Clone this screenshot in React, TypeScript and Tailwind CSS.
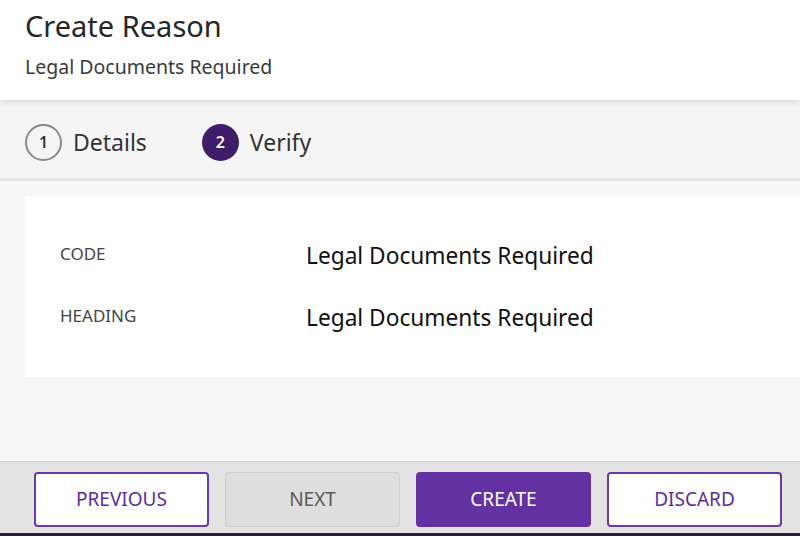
const font = { fontFamily: '"Noto Sans", "Open Sans", sans-serif' };

type Step = { n: number; label: string; active: boolean };

const steps: Step[] = [
  { n: 1, label: "Details", active: false },
  { n: 2, label: "Verify", active: true },
];

const rows = [
  { label: "CODE", value: "Legal Documents Required" },
  { label: "HEADING", value: "Legal Documents Required" },
];

export default function App() {
  return (
    <div
      className="w-full h-[536px] flex flex-col bg-[#f7f7f7] overflow-hidden"
      style={font}
    >
      {/* Header */}
      <div className="relative z-10 h-[100px] bg-white px-[25px] pt-[6px] shadow-[0_2px_6px_rgba(0,0,0,0.12)]">
        <h1 className="text-[29px] leading-[40px] text-[#262626]">Create Reason</h1>
        <p className="mt-[8px] text-[19.5px] leading-[26px] text-[#3a3a3a]">
          Legal Documents Required
        </p>
      </div>

      {/* Stepper */}
      <div className="h-[81px] shrink-0 flex items-center gap-[55px] px-[25px] pt-[6px] bg-[#f5f5f5] border-b-[3px] border-[#e6e6e6]">
        {steps.map((s) => (
          <div key={s.n} className="flex items-center gap-[11px]">
            <span
              className={`w-[37px] h-[37px] rounded-full flex items-center justify-center text-[16px] font-semibold ${
                s.active
                  ? "bg-[#3f1d6b] text-white"
                  : "border-2 border-[#8a8a8a] text-[#333]"
              }`}
            >
              {s.n}
            </span>
            <span className="text-[23px] text-[#333]">{s.label}</span>
          </div>
        ))}
      </div>

      {/* Content */}
      <div className="flex-1 pl-[25px] pt-[15px]">
        <div className="bg-white h-[181px] pt-[44px] pl-[35px] flex flex-col gap-[30px]">
          {rows.map((r) => (
            <div key={r.label} className="flex items-center h-[32px]">
              <span className="w-[246px] text-[17px] text-[#444] -mt-[4px]">{r.label}</span>
              <span className="text-[22.7px] text-[#111]">{r.value}</span>
            </div>
          ))}
        </div>
      </div>

      {/* Footer */}
      <div className="h-[75px] shrink-0 bg-[#e3e3e3] border-t border-[#d4d4d4] border-b-[3px] border-b-[#2b1d3a] flex items-center gap-[16px] pl-[34px] pt-[3px]">
        <button className="shrink-0 w-[175px] h-[55px] rounded-[4px] border-2 border-[#6a3aaa] bg-white text-[#5b2d9e] text-[19px]">
          PREVIOUS
        </button>
        <button className="shrink-0 w-[175px] h-[55px] rounded-[4px] border border-[#d0d0d0] bg-[#dedede] text-[#5a5a5a] text-[19px]">
          NEXT
        </button>
        <button className="shrink-0 w-[175px] h-[55px] rounded-[4px] bg-[#6431a2] text-white text-[19px]">
          CREATE
        </button>
        <button className="shrink-0 w-[175px] h-[55px] rounded-[4px] border-2 border-[#6a3aaa] bg-white text-[#5b2d9e] text-[19px]">
          DISCARD
        </button>
      </div>
    </div>
  );
}
